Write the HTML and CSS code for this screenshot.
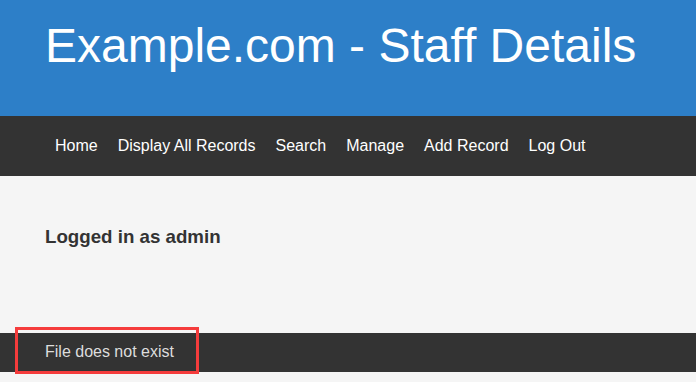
FILE: index.html
```html
<!DOCTYPE html>
<html lang="en">
<head>
<meta charset="utf-8">
<title>Example.com - Staff Details</title>
<link rel="stylesheet" href="styles.css">
</head>
<body>
<header class="site-header">
  <h1 class="site-title">Example.com - Staff Details</h1>
</header>
<nav class="site-nav">
  <a href="#" class="nav-link">Home</a>
  <a href="#" class="nav-link">Display All Records</a>
  <a href="#" class="nav-link">Search</a>
  <a href="#" class="nav-link">Manage</a>
  <a href="#" class="nav-link">Add Record</a>
  <a href="#" class="nav-link">Log Out</a>
</nav>
<main class="content">
  <h3 class="login-status">Logged in as admin</h3>
</main>
<footer class="site-footer">
  <span class="footer-msg">File does not exist</span>
  <div class="highlight-box"></div>
</footer>
</body>
</html>
```
FILE: styles.css
```css
html, body {
  margin: 0;
  padding: 0;
}
body {
  background: #f5f5f5;
  font-family: "Liberation Sans", Arial, sans-serif;
  color: #333;
  padding-bottom: 10px;
}
.site-header {
  background: #2d7fc8;
  height: 116px;
  box-sizing: border-box;
  padding: 18px 0 0 45px;
}
.site-title {
  margin: 0;
  font-size: 48px;
  font-weight: normal;
  line-height: 1.15;
  color: #fff;
}
.site-nav {
  background: #333;
  height: 60px;
  display: flex;
  align-items: center;
  padding-left: 45px;
}
.nav-link {
  color: #fff;
  text-decoration: none;
  font-size: 16px;
  padding: 0 10px;
}
.content {
  height: 157px;
  box-sizing: border-box;
  padding: 50px 45px 0;
}
.login-status {
  margin: 0;
  font-size: 18.72px;
  font-weight: bold;
  color: #333;
}
.site-footer {
  position: relative;
  background: #333;
  height: 39px;
  box-sizing: border-box;
  padding: 10px 45px 0;
}
.footer-msg {
  color: #ddd;
  font-size: 16px;
}
.highlight-box {
  position: absolute;
  z-index: 2;
  left: 15px;
  top: -6px;
  width: 184px;
  height: 47px;
  box-sizing: border-box;
  border: 3px solid #f53c3c;
}
```
